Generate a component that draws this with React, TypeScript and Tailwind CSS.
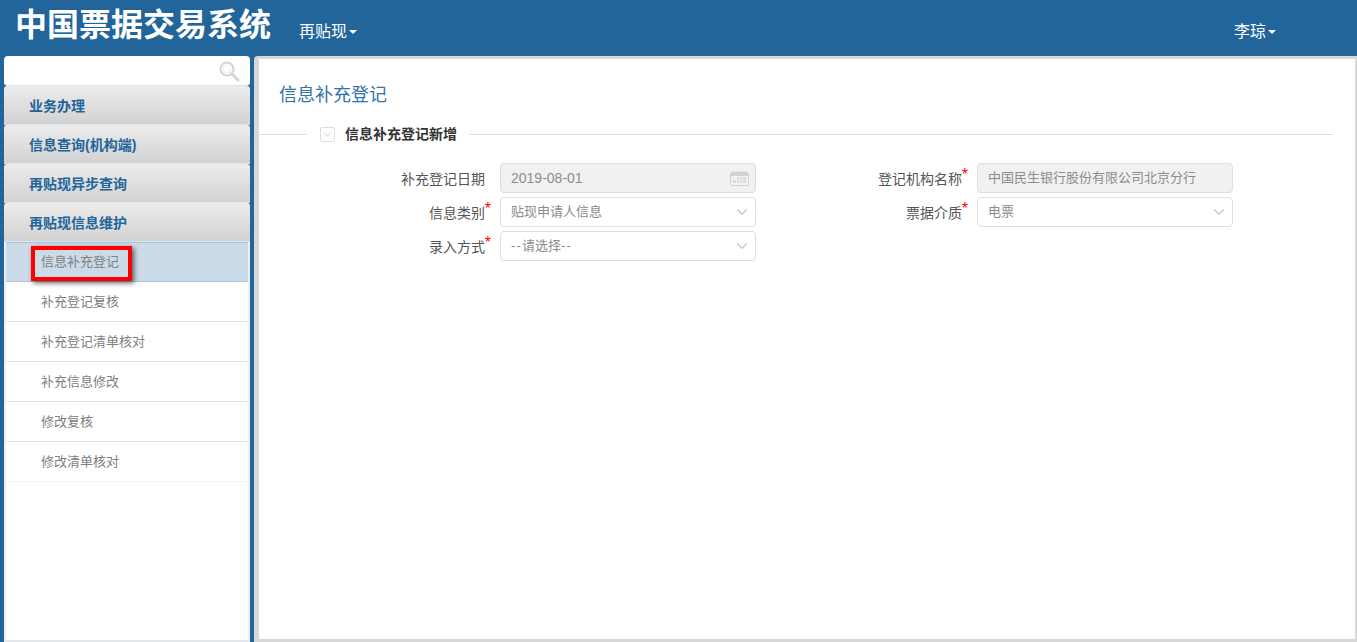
import type { ReactNode } from 'react'
import { ChevronDown } from 'lucide-react'

const FONT = "font-['Liberation_Sans','Noto_Sans_CJK_SC',sans-serif]"

const groups = ['业务办理', '信息查询(机构端)', '再贴现异步查询', '再贴现信息维护']
const subItems = ['补充登记复核', '补充登记清单核对', '补充信息修改', '修改复核', '修改清单核对']

function Caret() {
  return <span className="ml-[2px] inline-block border-x-[4px] border-t-[4px] border-x-transparent border-t-white align-middle" />
}

function SearchIcon() {
  return (
    <svg width="22" height="22" viewBox="0 0 22 22" fill="none" className="text-[#d4d4d4]">
      <circle cx="9" cy="9" r="6.5" stroke="currentColor" strokeWidth="2" />
      <circle cx="9" cy="9" r="4" stroke="#ececec" strokeWidth="1" />
      <path d="M14 14l6 6" stroke="currentColor" strokeWidth="3" strokeLinecap="round" />
    </svg>
  )
}

function CalendarIcon() {
  return (
    <svg width="19" height="15" viewBox="0 0 19 15" className="text-[#d2d2d2]">
      <rect x="0.5" y="1.5" width="18" height="13" rx="1.5" fill="none" stroke="currentColor" />
      <rect x="1" y="2" width="17" height="3" fill="currentColor" />
      <path d="M3 0v2M6 0v2M9 0v2M12 0v2M15 0v2" stroke="currentColor" />
      <path d="M7 6.5h2v2H7zM10 6.5h2v2h-2zM13 6.5h3v2h-3zM7 9.5h2v2H7zM10 9.5h2v2h-2zM13 9.5h3v2h-3zM3 9.5h3v2H3z" fill="currentColor" />
    </svg>
  )
}

function Label({ text, required }: { text: string; required?: boolean }) {
  return (
    <div className="relative flex h-[30px] items-center justify-end pr-[15px] pt-[2px] text-[14px] text-[#555]">
      <span>{text}</span>
      {required && <span className="absolute right-[9px] top-[2px] text-[16px] leading-[20px] text-[#f00]">*</span>}
    </div>
  )
}

function Field({ value, disabled, icon }: { value: ReactNode; disabled?: boolean; icon?: 'cal' | 'select' }) {
  return (
    <div className={`flex h-[30px] items-center justify-between rounded-[4px] border border-[#dcdfe6] pl-[10px] text-[13px] text-[#8c8c8c] ${icon === 'cal' ? 'pr-[6px]' : 'pr-[4px]'} ${disabled ? 'bg-[#f1f1f1]' : 'bg-white'}`}>
      <span>{value}</span>
      {icon === 'cal' && <CalendarIcon />}
      {icon === 'select' && <ChevronDown size={18} strokeWidth={1.75} className="text-[#c8c8c8]" />}
    </div>
  )
}

export default function App() {
  return (
    <div className={`flex h-[642px] flex-col overflow-hidden bg-[#22659b] ${FONT}`}>
      <header className="flex h-[56px] shrink-0 items-center text-white">
        <h1 className="mb-[6px] ml-[15px] text-[32px] font-bold leading-none">中国票据交易系统</h1>
        <span className="ml-[28px] mt-[7px] text-[16px]">再贴现<Caret /></span>
        <span className="ml-auto mr-[81px] mt-[7px] text-[16px]">李琼<Caret /></span>
      </header>

      <div className="flex min-h-0 flex-1">
        <aside className="ml-[4px] flex w-[246px] shrink-0 flex-col">
          <div className="flex h-[30px] items-center justify-end rounded-[4px] border-b border-[#dfe3ea] bg-white pr-[10px]">
            <SearchIcon />
          </div>
          {groups.map(g => (
            <div key={g} className="flex h-[39px] items-center rounded-t-[3px] border-b border-[#dce6f0] bg-gradient-to-b from-[#ececec] to-[#d2d2d2] pl-[25px] pt-[2px] text-[14px] font-bold text-[#22659b]">
              {g}
            </div>
          ))}
          <div className="flex-1 border-x-2 border-b-2 border-x-[#eceff2] border-b-[#e4e8ec] bg-white">
            <div className="relative flex h-[40px] items-center border-y border-[#a9c3dc] bg-[#ccdbe8] pl-[35px] text-[13px] text-[#808080]">
              信息补充登记
              <div className="absolute left-[25px] top-[3px] h-[35px] w-[101px] border-[4px] border-[#f00] shadow-[2px_2px_5px_rgba(0,0,0,0.6)]" />
            </div>
            {subItems.map((s, i) => (
              <div key={s} className={`flex h-[40px] items-center border-b pl-[35px] text-[13px] text-[#808080] ${i === subItems.length - 1 ? 'border-[#f2f5f8]' : 'border-[#dce6f0]'}`}>
                {s}
              </div>
            ))}
          </div>
        </aside>

        <main className="ml-[4px] min-w-0 flex-1 rounded-tl-[4px] border-[3px] border-b-[3px] border-r-[2px] border-[#d8d8d8] border-l-[5px] bg-white">
          <h2 className="ml-[20px] mt-[22px] text-[18px] leading-[28px] text-[#3273a8]">信息补充登记</h2>

          <div className="mt-[13px] flex h-[24px] items-center">
            <div className="h-px w-[48px] bg-[#d8dde6]" />
            <span className="ml-[13px] flex h-[15px] w-[15px] items-center justify-center rounded-[2px] border border-[#d8dfe9]">
              <ChevronDown size={13} strokeWidth={1.75} className="text-[#c3ccd9]" />
            </span>
            <span className="ml-[10px] text-[14px] font-bold text-[#333]">信息补充登记新增</span>
            <div className="ml-[12px] mr-[22px] h-px flex-1 bg-[#d8dde6]" />
          </div>

          <div className="ml-[100px] mt-[17px] grid grid-cols-[141px_256px_221px_256px] gap-y-[4px]">
            <Label text="补充登记日期" />
            <Field value={<span className="text-[14px]">2019-08-01</span>} disabled icon="cal" />
            <Label text="登记机构名称" required />
            <Field value="中国民生银行股份有限公司北京分行" disabled />
            <Label text="信息类别" required />
            <Field value="贴现申请人信息" icon="select" />
            <Label text="票据介质" required />
            <Field value="电票" icon="select" />
            <Label text="录入方式" required />
            <Field value={<><span className="tracking-[1.2px]">--</span>请选择<span className="tracking-[1.2px]">--</span></>} icon="select" />
          </div>
        </main>
      </div>
    </div>
  )
}
